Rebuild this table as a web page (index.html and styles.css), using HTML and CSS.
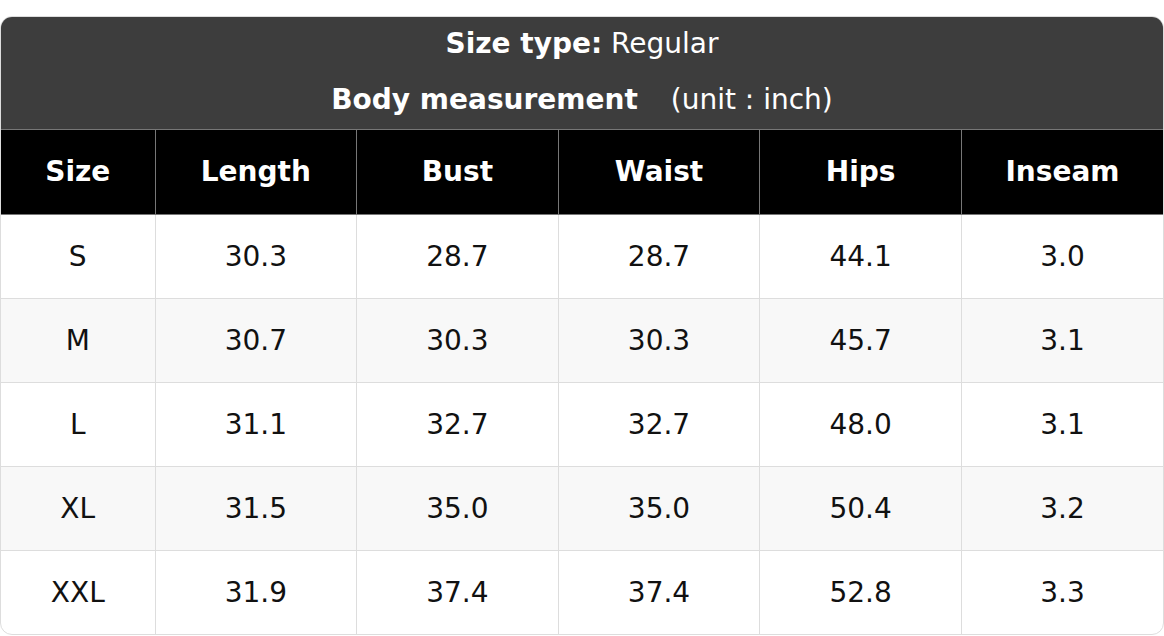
FILE: index.html
```html
<!DOCTYPE html>
<html>
<head>
<meta charset="utf-8">
<link rel="stylesheet" href="styles.css">
</head>
<body>
<div class="chart">
  <div class="title">
    <div class="line"><b>Size type:</b>&nbsp;Regular</div>
    <div class="line"><b>Body measurement</b><span class="unit">(unit : inch)</span></div>
  </div>
  <table class="grid">
    <colgroup>
      <col class="c-size">
      <col><col><col><col><col>
    </colgroup>
    <thead>
      <tr><th>Size</th><th>Length</th><th>Bust</th><th>Waist</th><th>Hips</th><th>Inseam</th></tr>
    </thead>
    <tbody>
      <tr><td>S</td><td>30.3</td><td>28.7</td><td>28.7</td><td>44.1</td><td>3.0</td></tr>
      <tr><td>M</td><td>30.7</td><td>30.3</td><td>30.3</td><td>45.7</td><td>3.1</td></tr>
      <tr><td>L</td><td>31.1</td><td>32.7</td><td>32.7</td><td>48.0</td><td>3.1</td></tr>
      <tr><td>XL</td><td>31.5</td><td>35.0</td><td>35.0</td><td>50.4</td><td>3.2</td></tr>
      <tr><td>XXL</td><td>31.9</td><td>37.4</td><td>37.4</td><td>52.8</td><td>3.3</td></tr>
    </tbody>
  </table>
</div>
</body>
</html>
```

FILE: styles.css
```css
html, body {
  margin: 0;
  padding: 0;
  background: #ffffff;
}
body {
  padding-top: 16px;
  font-family: "DejaVu Sans", sans-serif;
  font-size: 28px;
  color: #111111;
}
.chart {
  width: 1164px;
  box-sizing: border-box;
  border: 1px solid #dddddd;
  border-radius: 12px;
  overflow: hidden;
}
.title {
  background: #3d3d3d;
  color: #ffffff;
}
.line {
  height: 56px;
  box-sizing: border-box;
  padding-bottom: 4px;
  display: flex;
  align-items: center;
  justify-content: center;
  white-space: pre;
}
.unit {
  margin-left: 33px;
}
.grid {
  width: 100%;
  border-collapse: collapse;
  table-layout: fixed;
}
.c-size {
  width: 154px;
}
.grid th {
  background: #000000;
  color: #ffffff;
  font-weight: bold;
  height: 82px;
  padding: 0 0 2px 0;
  border: 1px solid #777777;
  text-align: center;
}
.grid td {
  height: 83px;
  padding: 0;
  border: 1px solid #dddddd;
  text-align: center;
}
.grid tr > :first-child {
  border-left: none;
}
.grid tr > :last-child {
  border-right: none;
}
.grid tbody tr:last-child td {
  border-bottom: none;
}
.grid tbody tr:nth-child(even) td {
  background: #f8f8f8;
}
```
